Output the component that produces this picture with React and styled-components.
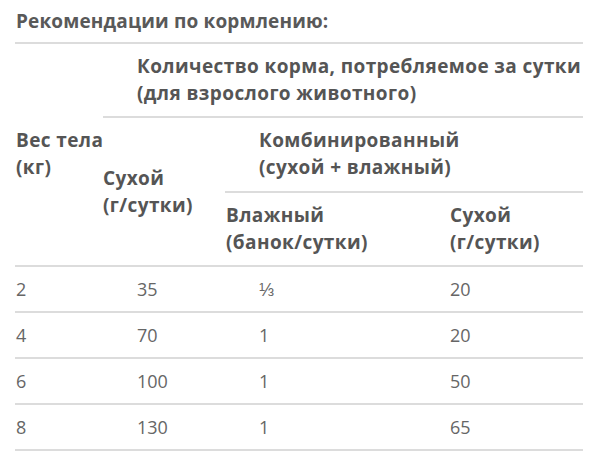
import React from 'react';
import styled, { createGlobalStyle } from 'styled-components';

const Global = createGlobalStyle`
  body {
    margin: 0;
    background: #fff;
    font-family: "Open Sans", "Liberation Sans", sans-serif;
  }
`;

const Page = styled.div`
  width: 596px;
  padding: 0 13px 0 15px;
  box-sizing: border-box;
  color: #555;
`;

const Title = styled.h3`
  margin: 0;
  padding: 8px 0 7px 1px;
  font-size: 19px;
  font-weight: 700;
  letter-spacing: 0.15px;
  line-height: 27px;
  color: #595959;
  border-bottom: 2px solid #dcdcdc;
`;

const Table = styled.div`
  display: grid;
  grid-template-columns: 88px 122px 225px 133px;
  line-height: 27px;
`;

const Cell = styled.div`
  padding: 9px 0;
  padding-left: ${p => p.$indent || 0}px;
  font-size: ${p => (p.$head ? 19 : 18)}px;
  letter-spacing: ${p => (p.$head ? '0.4px' : '0')};
  font-weight: ${p => (p.$head ? 700 : 400)};
  color: ${p => (p.$head ? '#555' : '#666')};
  align-self: ${p => p.$align || 'stretch'};
  white-space: nowrap;
  ${p => p.$line && 'border-bottom: 2px solid #dcdcdc;'}
  ${p => !p.$head && 'padding-bottom: 8px;'}
  grid-column: ${p => p.$col};
  grid-row: ${p => p.$row};
`;

const rows = [
  ['2', '35', '⅓', '20'],
  ['4', '70', '1', '20'],
  ['6', '100', '1', '50'],
  ['8', '130', '1', '65'],
];

const dataIndent = [1, 34, 34, 0];

export default function App() {
  return (
    <Page>
      <Global />
      <Title>Рекомендации по кормлению:</Title>
      <Table>
        <Cell $col="2 / 5" $row="1" $head $line $indent={34}>
          Количество корма, потребляемое за сутки<br />(для взрослого животного)
        </Cell>
        <Cell $col="1" $row="2 / 4" $head $indent={1}>
          Вес тела<br />(кг)
        </Cell>
        <Cell $col="2" $row="2 / 4" $head $align="center">
          Сухой<br />(г/сутки)
        </Cell>
        <Cell $col="3 / 5" $row="2" $head $line $indent={34} style={{ paddingBottom: 10 }}>
          Комбинированный<br />(сухой + влажный)
        </Cell>
        <Cell $col="3" $row="3" $head $indent={1}>
          Влажный<br />(банок/сутки)
        </Cell>
        <Cell $col="4" $row="3" $head>
          Сухой<br />(г/сутки)
        </Cell>
        <Cell $col="1 / 5" $row="4" $line style={{ padding: 0 }} />
        {rows.map((r, i) =>
          r.map((v, j) => (
            <Cell key={`${i}-${j}`} $col={j + 1} $row={i + 5} $line $indent={dataIndent[j]}>
              {v}
            </Cell>
          ))
        )}
      </Table>
    </Page>
  );
}
